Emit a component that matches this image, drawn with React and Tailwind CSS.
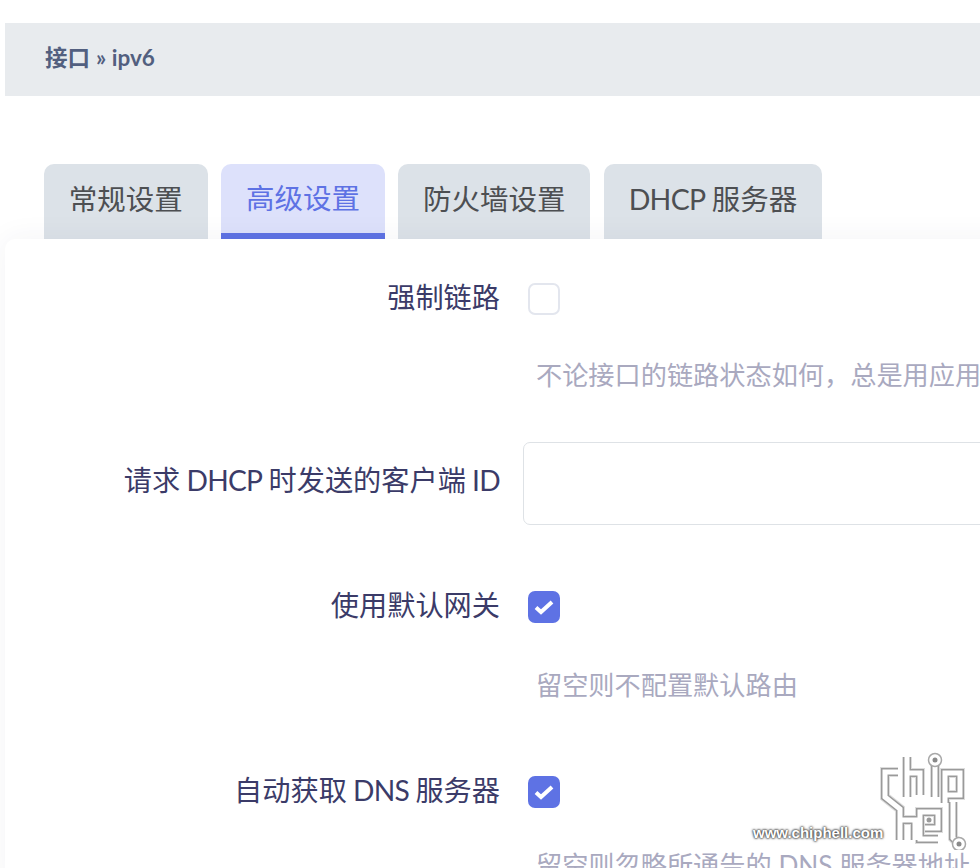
const cjk = { fontFamily: 'Lato, "Noto Sans CJK SC", sans-serif' }

const logoPath =
  'M28 27H15V52L30 64V95M30 75H45V95M37 12V52M37 28H50V50M65 18V52M75 58V28H90V50H75M68 94H50V67H68V83H55M83 57V93L88 98'

function Latin({ children }) {
  return <span className="tracking-[-0.7px]">{children}</span>
}

function Tab({ children, active }) {
  return (
    <div
      className={
        active
          ? 'flex h-[75px] items-center rounded-t-[10px] border-b-[6px] border-[#5e72e4] bg-[#dde1fb] px-[24.8px] pb-[2px] pt-[2px] text-[28.5px] text-[#5e72e4]'
          : 'flex h-[75px] items-center rounded-t-[10px] bg-[#dce2e8] px-[24.8px] pb-[4px] text-[28.5px] text-[#4d4f52] [word-spacing:-1px]'
      }
    >
      <span>{children}</span>
    </div>
  )
}

function Check({ checked }) {
  return checked ? (
    <span className="flex h-8 w-8 items-center justify-center rounded-[7px] bg-[#5e72e4]">
      <svg width="20" height="16" viewBox="0 0 20 16" fill="none">
        <path d="M2 8.5l5 4.5L18 3" stroke="#fff" strokeWidth="4" />
      </svg>
    </span>
  ) : (
    <span className="block h-8 w-8 rounded-[7px] border-2 border-[#e3e6ee] bg-white" />
  )
}

function Row({ label, className, labelClass = 'pb-[4px]', children }) {
  return (
    <div className={`grid grid-cols-[500px_1fr] gap-x-[23px] ${className}`}>
      <div className={`flex items-center justify-end text-[28.2px] leading-none text-[#3b3b68] [word-spacing:-1px] ${labelClass}`}>
        <span>{label}</span>
      </div>
      <div className="flex items-center">{children}</div>
    </div>
  )
}

function Help({ children, className }) {
  return (
    <div className={`ml-[536px] whitespace-nowrap text-[26.2px] leading-[40px] text-[#a9a9bf] ${className}`}>
      {children}
    </div>
  )
}

function Watermark() {
  return (
    <>
      <span
        className="absolute left-[753px] top-[823px] text-[15px] font-bold leading-5 text-white"
        style={{ fontFamily: '"Liberation Sans", sans-serif', textShadow: '0 0 2px #444, 0 0 2px #444, 0 0 3px #555' }}
      >
        www.chiphell.com
      </span>
      <svg className="absolute left-[870px] top-[745px]" width="105" height="105" viewBox="0 0 105 105" fill="none">
        <path d={logoPath} stroke="#dcdcdc" strokeWidth="10" />
        <path d={logoPath} stroke="#9a9a9a" strokeWidth="8" />
        <path d={logoPath} stroke="#fff" strokeWidth="5" />
        <circle cx="65" cy="15" r="6.5" fill="#fff" stroke="#a8a8a8" strokeWidth="1.5" />
        <circle cx="65" cy="15" r="2.5" fill="#8a8a8a" />
        <circle cx="89" cy="99" r="6.5" fill="#fff" stroke="#a8a8a8" strokeWidth="1.5" />
        <circle cx="89" cy="99" r="2.5" fill="#8a8a8a" />
        <circle cx="59" cy="75" r="2.5" fill="#9a9a9a" />
      </svg>
    </>
  )
}

export default function App() {
  return (
    <div className="relative h-[868px] w-[980px] overflow-hidden bg-white pt-[23px]" style={cjk}>
      <div className="ml-[5px] flex h-[73px] items-center bg-[#e8ebee] pb-[3px] pl-[40px] text-[22.5px] font-medium text-[#525f7f]">
        <span className="font-bold">接口</span>
        <span className="ml-[6px] font-bold">» ipv6</span>
      </div>

      <div className="ml-[44px] mt-[68px] flex gap-[13.5px]">
        <Tab>常规设置</Tab>
        <Tab active>高级设置</Tab>
        <Tab>防火墙设置</Tab>
        <Tab><Latin>DHCP</Latin> 服务器</Tab>
      </div>

      <div className="relative ml-[5px] w-[1100px] rounded-tl-[10px] bg-white pt-[44px] shadow-[0_0_30px_rgba(50,50,93,0.06)]">
        <div className="-ml-[5px]">
          <Row label="强制链路" className="h-8">
            <span className="ml-[5px]"><Check /></span>
          </Row>
          <Help className="mt-[40px]">不论接口的链路状态如何，总是用应用</Help>
          <Row
            label={<>请求 <Latin>DHCP</Latin> 时发送的客户端 <Latin>ID</Latin></>}
            labelClass="pb-[7px]"
            className="mt-[47px]"
          >
            <div className="h-[83px] w-[600px] rounded-[7px] border border-[#dee2e6] bg-white" />
          </Row>
          <Row label="使用默认网关" className="mt-[66px] h-8">
            <span className="ml-[5px]"><Check checked /></span>
          </Row>
          <Help className="mt-[42px]">留空则不配置默认路由</Help>
          <Row label={<>自动获取 <Latin>DNS</Latin> 服务器</>} className="mt-[71px] h-8">
            <span className="ml-[5px]"><Check checked /></span>
          </Row>
          <Help className="mt-[37px]">留空则忽略所通告的 DNS 服务器地址</Help>
        </div>
      </div>

      <Watermark />
    </div>
  )
}
